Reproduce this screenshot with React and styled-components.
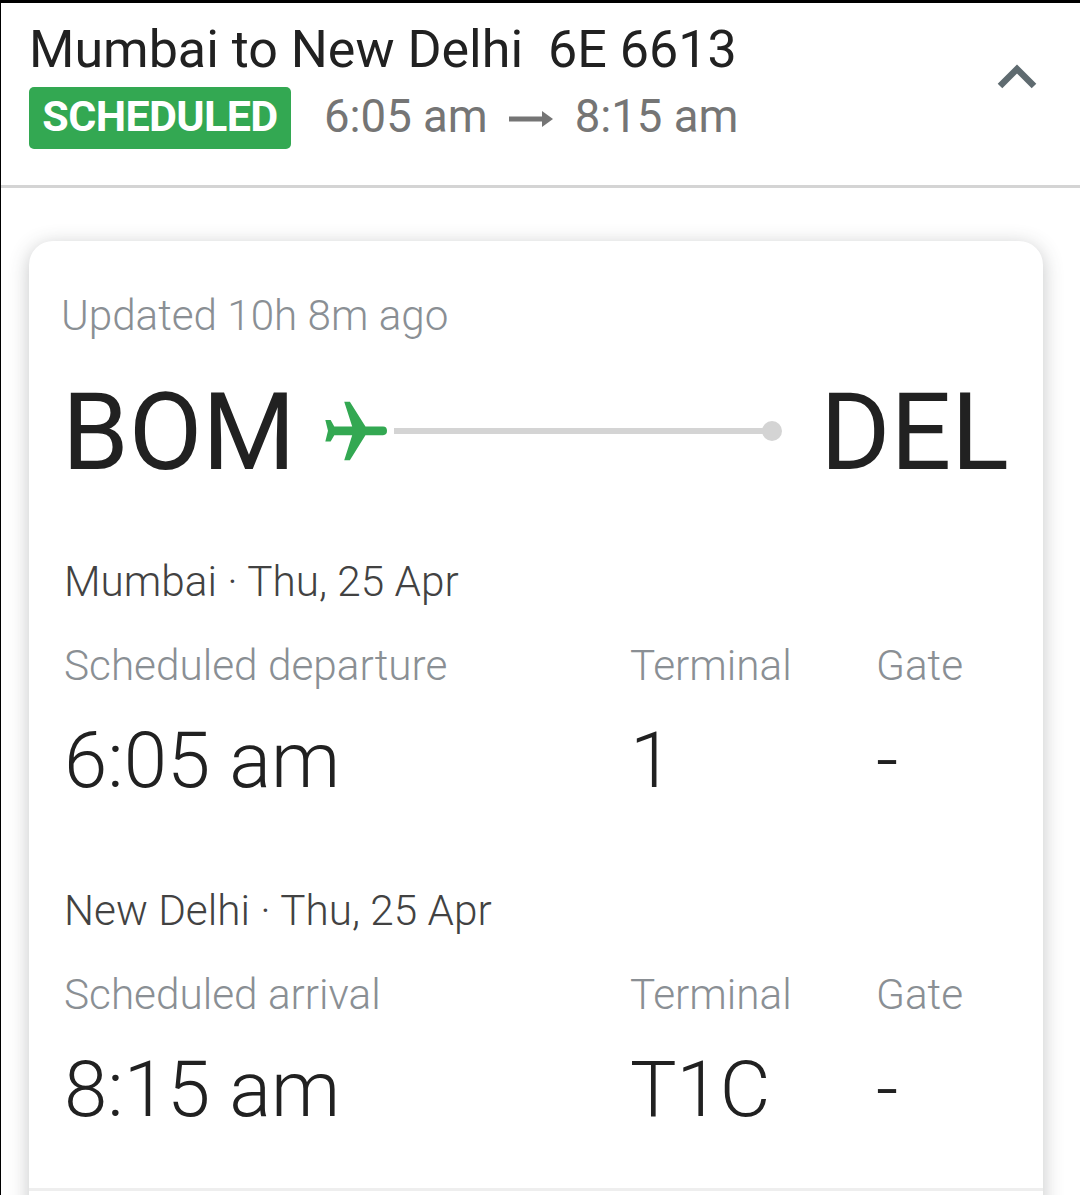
import React from "react";
import styled, { createGlobalStyle } from "styled-components";

const Global = createGlobalStyle`
  html, body { margin: 0; padding: 0; background: #fff; }
  body { font-family: Roboto, "Liberation Sans", sans-serif; }
`;

const Page = styled.div`
  width: 1080px;
  height: 1195px;
  box-sizing: border-box;
  overflow: hidden;
  background: #fff;
  border-top: 3px solid #000;
  border-left: 1px solid #000;
`;

const Header = styled.header`
  height: 185px;
  box-sizing: border-box;
  border-bottom: 3px solid #d4d4d4;
  padding: 18px 43px 0 28px;
  display: flex;
  justify-content: space-between;
  align-items: flex-start;
`;

const HeaderText = styled.div`
  display: flex;
  flex-direction: column;
`;

const Title = styled.div`
  font-size: 52px;
  line-height: 58px;
  color: #212121;
  display: flex;
  gap: 25px;
`;

const StatusRow = styled.div`
  display: flex;
  align-items: center;
  margin-top: 8px;
`;

const Badge = styled.span`
  width: 262px;
  height: 62px;
  border-radius: 5px;
  background: #33a852;
  color: #fff;
  font-size: 43px;
  line-height: 58px;
  padding-bottom: 4px;
  box-sizing: border-box;
  font-weight: 700;
  letter-spacing: -0.6px;
  display: flex;
  align-items: center;
  justify-content: center;
`;

const Times = styled.div`
  margin: 0 0 3px 33px;
  display: flex;
  align-items: center;
  gap: 21.5px;
  font-size: 45.5px;
  color: #757575;
`;

const Arrow = styled.svg`
  width: 44px;
  height: 20px;
  margin-top: 4px;
`;

const ChevronIcon = styled.svg`
  width: 40px;
  height: 26px;
  margin-top: 43px;
`;

const Card = styled.section`
  margin: 53px 37px 0 28px;
  border-radius: 24px;
  background: #fff;
  box-shadow: 0 4px 20px rgba(60, 64, 67, 0.3);
  padding: 47px 34px 0 35px;
  height: 1000px;
  box-sizing: border-box;
`;

const Updated = styled.div`
  margin-left: -3px;
  font-size: 42.2px;
  line-height: 56px;
  font-weight: 300;
  color: #8a8f94;
`;

const Route = styled.div`
  display: flex;
  align-items: center;
  height: 120px;
  margin-top: 29px;
`;

const Code = styled.div`
  font-size: 107px;
  line-height: 120px;
  color: #212121;
  margin-left: ${(p) => p.$shift || 0}px;
`;

const Track = styled.div`
  flex: 1;
  display: flex;
  align-items: center;
  margin: 0 38px 4px 27px;
`;

const PlaneIcon = styled.svg`
  width: 67px;
  height: 63px;
  flex: none;
`;

const Line = styled.div`
  flex: 1;
  height: 6px;
  margin-left: 4px;
  background: #d4d4d4;
`;

const Dot = styled.div`
  width: 20px;
  height: 20px;
  border-radius: 50%;
  margin-left: -1px;
  background: #d4d4d4;
`;

const Leg = styled.div`
  margin-top: ${(p) => p.$top}px;
`;

const LegTitle = styled.div`
  font-size: 42.3px;
  line-height: 56px;
  font-weight: 300;
  color: #424242;
`;

const Grid = styled.div`
  display: grid;
  grid-template-columns: 566px 246px 1fr;
  margin-top: 28px;
`;

const Label = styled.div`
  font-size: 42.3px;
  line-height: 56px;
  font-weight: 300;
  color: #8a8f94;
`;

const Value = styled.div`
  font-size: 78px;
  line-height: 96px;
  font-weight: 300;
  color: #212121;
  margin-top: 19px;
`;

const Divider = styled.div`
  height: 3px;
  margin: 50px -34px 0 -35px;
  background: #eeeeee;
`;

const LegBlock = ({ top, place, label, time, terminal }) => (
  <Leg $top={top}>
    <LegTitle>{place} · Thu, 25 Apr</LegTitle>
    <Grid>
      <div>
        <Label>{label}</Label>
        <Value>{time}</Value>
      </div>
      <div>
        <Label>Terminal</Label>
        <Value>{terminal}</Value>
      </div>
      <div>
        <Label>Gate</Label>
        <Value>-</Value>
      </div>
    </Grid>
  </Leg>
);

export default function App() {
  return (
    <>
      <Global />
      <Page>
        <Header>
          <HeaderText>
            <Title>
              <span>Mumbai to New Delhi</span>
              <span>6E 6613</span>
            </Title>
            <StatusRow>
              <Badge>SCHEDULED</Badge>
              <Times>
                <span>6:05 am</span>
                <Arrow viewBox="0 0 44 20">
                  <path d="M0 10h36" stroke="#757575" strokeWidth="5" />
                  <path d="M33 2l11 8-11 8z" fill="#757575" />
                </Arrow>
                <span>8:15 am</span>
              </Times>
            </StatusRow>
          </HeaderText>
          <ChevronIcon viewBox="0 0 40 26">
            <path d="M3 22L20 5l17 17" fill="none" stroke="#5f6b70" strokeWidth="6.5" />
          </ChevronIcon>
        </Header>
        <Card>
          <Updated>Updated 10h 8m ago</Updated>
          <Route>
            <Code $shift={-2}>BOM</Code>
            <Track>
              <PlaneIcon viewBox="70 90 200 190">
                <path
                  fill="#33a852"
                  d="M262 183q0-13-12-13H197L150 95H133L157 170H103L92 150H76L84 183L76 215H92L103 196H157L133 272H150L197 196H250q12 0 12-13z"
                />
              </PlaneIcon>
              <Line />
              <Dot />
            </Track>
            <Code>DEL</Code>
          </Route>
          <LegBlock top={61} place="Mumbai" label="Scheduled departure" time="6:05 am" terminal="1" />
          <LegBlock top={74} place="New Delhi" label="Scheduled arrival" time="8:15 am" terminal="T1C" />
          <Divider />
        </Card>
      </Page>
    </>
  );
}
